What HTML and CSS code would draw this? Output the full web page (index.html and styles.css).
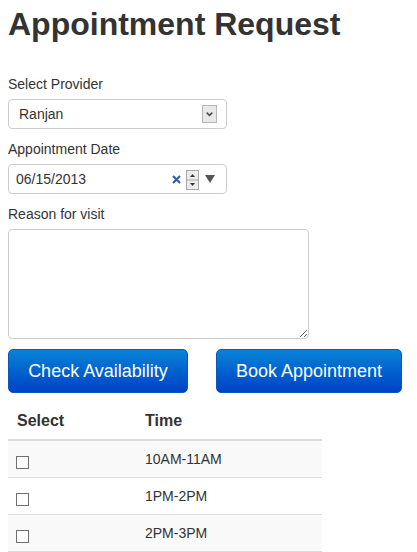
FILE: index.html
```html
<!DOCTYPE html>
<html>
<head>
<meta charset="utf-8">
<link rel="stylesheet" href="styles.css">
</head>
<body>
<div class="page">
  <h1 class="title">Appointment Request</h1>

  <div class="field first">
    <div class="label">Select Provider</div>
    <div class="control select">
      <span class="value">Ranjan</span>
      <span class="select-btn">
        <svg width="14" height="18" viewBox="0 0 14 18"><path d="M4 7.5L7 10.5L10 7.5" stroke="#4a4a4a" stroke-width="1.6" fill="none"/></svg>
      </span>
    </div>
  </div>

  <div class="field">
    <div class="label">Appointment Date</div>
    <div class="control date">
      <span class="value">06/15/2013</span>
      <span class="date-icons">
        <svg class="clear" width="9" height="9" viewBox="0 0 9 9"><path d="M1 1L8 8M8 1L1 8" stroke="#2d5fb5" stroke-width="2.2"/></svg>
        <svg class="spin" width="13" height="20" viewBox="0 0 13 20">
          <rect x="0.5" y="0.5" width="12" height="19" fill="#ececec" stroke="#a6a6a6"/>
          <line x1="1" y1="10" x2="12" y2="10" stroke="#a6a6a6"/>
          <path d="M4 7H9L6.5 4Z" fill="#333"/>
          <path d="M4 13H9L6.5 16Z" fill="#333"/>
        </svg>
        <svg class="drop" width="10" height="8" viewBox="0 0 10 8"><path d="M0 0H10L5 8Z" fill="#555"/></svg>
      </span>
    </div>
  </div>

  <div class="field">
    <div class="label">Reason for visit</div>
    <textarea class="reason"></textarea>
  </div>

  <div class="buttons">
    <button class="btn btn-check">Check Availability</button>
    <button class="btn btn-book">Book Appointment</button>
  </div>

  <table class="slots">
    <thead>
      <tr><th class="col-select">Select</th><th>Time</th></tr>
    </thead>
    <tbody>
      <tr class="odd"><td><span class="check"></span></td><td>10AM-11AM</td></tr>
      <tr><td><span class="check"></span></td><td>1PM-2PM</td></tr>
      <tr class="odd"><td><span class="check"></span></td><td>2PM-3PM</td></tr>
    </tbody>
  </table>
</div>
</body>
</html>
```

FILE: styles.css
```css
html, body {
  margin: 0;
  padding: 0;
  background: #fff;
}
body {
  font-family: "Liberation Sans", Arial, sans-serif;
  font-size: 14px;
  color: #333;
}
.page {
  padding: 6px 8px 0;
}
.title {
  margin: 0;
  font-size: 32px;
  line-height: 36px;
  font-weight: bold;
  color: #333;
}
.field {
  margin-top: 10px;
}
.field.first {
  margin-top: 32px;
}
.label {
  line-height: 20px;
  margin-bottom: 5px;
}
.control {
  box-sizing: border-box;
  width: 219px;
  height: 30px;
  border: 1px solid #ccc;
  border-radius: 4px;
  display: flex;
  align-items: center;
  line-height: 20px;
  background: #fff;
}
.select {
  padding: 0 9px 0 10px;
}
.select .value {
  flex: 1;
  margin-top: -1px;
}
.select-btn {
  box-sizing: border-box;
  width: 15px;
  height: 18px;
  border: 1px solid #b5b5b5;
  background: #e8e8e8;
  display: flex;
  align-items: center;
  justify-content: center;
}
.select-btn svg {
  display: block;
}
.date {
  padding: 0 11px 0 7px;
}
.date .value {
  flex: 1;
}
.date-icons {
  display: flex;
  align-items: center;
}
.date-icons svg {
  display: block;
}
.clear {
  margin-right: 5px;
  margin-top: 1px;
}
.spin {
  margin-right: 6px;
  margin-top: 1px;
}
.reason {
  display: block;
  box-sizing: border-box;
  width: 301px;
  height: 110px;
  margin: 0;
  border: 1px solid #ccc;
  border-radius: 4px;
  padding: 6px 10px;
  font-family: "Liberation Sans", Arial, sans-serif;
  font-size: 14px;
  resize: both;
}
.buttons {
  display: flex;
  gap: 28px;
  margin-top: 10px;
}
.btn {
  box-sizing: border-box;
  height: 44px;
  padding: 0;
  border: 1px solid #0b58bb;
  border-radius: 5px;
  background: linear-gradient(to bottom, #0a84d6 0%, #0062cf 50%, #0042c6 100%);
  color: #fff;
  font-family: "Liberation Sans", Arial, sans-serif;
  font-size: 18px;
  line-height: 20px;
  white-space: nowrap;
  text-align: center;
  cursor: pointer;
}
.btn-check {
  width: 180px;
}
.btn-book {
  width: 186px;
}
.slots {
  margin-top: 10px;
  width: 314px;
  border-collapse: separate;
  border-spacing: 0;
}
.slots th {
  text-align: left;
  font-size: 16px;
  font-weight: bold;
  line-height: 20px;
  padding: 8px 8px 8px 9px;
  border-bottom: 2px solid #ddd;
  color: #333;
}
.slots th.col-select {
  width: 111px;
}
.slots td {
  padding: 8px 8px 8px 9px;
  line-height: 20px;
  border-bottom: 1px solid #ddd;
  vertical-align: top;
}
.slots td:first-child {
  padding-left: 8px;
}
.slots tr.odd td {
  background: #f9f9f9;
}
.check {
  display: block;
  box-sizing: border-box;
  width: 13px;
  height: 13px;
  border: 1px solid #707070;
  background: #fff;
  margin-top: 7px;
}
```
